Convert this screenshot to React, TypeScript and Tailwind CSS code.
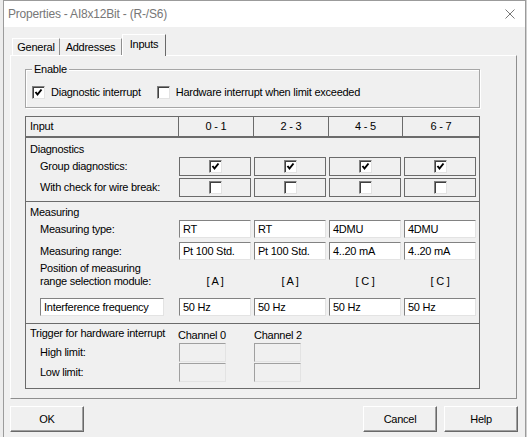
import React from "react";

const Check = ({ checked }: { checked: boolean }) => (
  <div className="w-[13px] h-[13px] bg-white border border-t-[#808080] border-l-[#808080] border-r-[#e3e3e3] border-b-[#e3e3e3] shadow-[inset_1px_1px_0_#404040] flex items-center justify-center shrink-0">
    {checked && (
      <svg width="11" height="11" viewBox="0 0 11 11">
        <polyline points="2.5,5 4.5,7.5 8.5,2.5" fill="none" stroke="#000" strokeWidth="2" />
      </svg>
    )}
  </div>
);

const Field = ({ text, w }: { text: string; w: string }) => (
  <div
    className={`${w} h-full bg-white border border-t-[#828282] border-l-[#828282] border-r-[#e3e3e3] border-b-[#e3e3e3] pl-[3px] flex items-center whitespace-nowrap overflow-hidden`}
  >
    {text}
  </div>
);

const Disabled = () => (
  <div className="w-[47px] h-full bg-[#f0f0f0] border border-t-[#a0a0a0] border-l-[#a0a0a0] border-r-[#e3e3e3] border-b-[#e3e3e3]" />
);

const cols = ["0 - 1", "2 - 3", "4 - 5", "6 - 7"];

const Row = ({ label, children, h }: { label: string; children: React.ReactNode; h: string }) => (
  <div className={`flex ${h}`}>
    <div className="w-[153px] pl-[14px] flex items-center">{label}</div>
    {children}
  </div>
);

const Btn = ({ text }: { text: string }) => (
  <div className="w-[74px] h-[26px] bg-[#f0f0f0] border border-t-white border-l-white border-r-[#696969] border-b-[#696969] shadow-[inset_-1px_-1px_0_#a0a0a0] flex items-center justify-center">
    {text}
  </div>
);

export default function App() {
  return (
    <div className="w-[529px] h-[437px] overflow-hidden bg-white flex font-['Liberation_Sans',Arial,sans-serif] text-[11px] tracking-[-0.25px] text-black leading-[13px]">
      <div className="w-[3px] bg-[#ececec] shrink-0" />
      <div className="w-[523px] h-[450px] border border-[#9b9b9b] bg-[#f0f0f0] flex flex-col shrink-0">
        {/* Title bar */}
        <div className="h-[26px] bg-white flex items-center justify-between pl-[4px] pr-[10px]">
          <span className="text-[12px] tracking-[-0.2px] text-[#777]">Properties - AI8x12Bit - (R-/S6)</span>
          <svg width="10" height="10" viewBox="0 0 10 10">
            <path d="M0.5 0.5 L9.5 9.5 M9.5 0.5 L0.5 9.5" stroke="#777" strokeWidth="1" />
          </svg>
        </div>

        {/* Tabs */}
        <div className="mt-[7px] h-[21px] flex items-end pl-[8px] relative z-10">
          <div className="w-[48px] h-[17px] border border-b-0 border-t-white border-l-white border-r-[#8e8e8e] flex items-center justify-center">
            General
          </div>
          <div className="w-[62px] h-[17px] border border-b-0 border-t-white border-l-0 border-r-[#8e8e8e] flex items-center justify-center">
            Addresses
          </div>
          <div className="w-[44px] h-[22px] -mb-[1px] bg-[#f0f0f0] border border-b-0 border-t-white border-l-white border-r-[#696969] flex items-start justify-center pt-[3px]">
            Inputs
          </div>
        </div>

        {/* Panel */}
        <div className="ml-[6px] w-[507px] h-[344px] border border-t-white border-l-white border-r-[#8e8e8e] border-b-[#8e8e8e] pt-[13px] pl-[14px] flex flex-col">
          {/* Enable group */}
          <div className="relative w-[455px] h-[39px] border border-[#a6a6a6] shadow-[inset_1px_1px_0_#fff,1px_1px_0_#fff] pt-[16px] pl-[6px]">
            <span className="absolute -top-[7px] left-[6px] px-[2px] bg-[#f0f0f0]">Enable</span>
            <div className="flex items-center h-[13px]">
              <Check checked />
              <span className="ml-[6px]">Diagnostic interrupt</span>
              <span className="ml-[16px]">
                <Check checked={false} />
              </span>
              <span className="ml-[6px]">Hardware interrupt when limit exceeded</span>
            </div>
          </div>

          {/* Table */}
          <div className="mt-[8px] w-[455px] border border-[#6b6b6b] flex flex-col">
            {/* header */}
            <div className="h-[21px] border-b-2 border-[#6b6b6b] grid grid-cols-[152px_75px_75px_74px_1fr]">
              <div className="pl-[4px] flex items-center">Input</div>
              {cols.map((c) => (
                <div key={c} className="border-l border-[#6b6b6b] flex items-center justify-center">
                  {c}
                </div>
              ))}
            </div>

            {/* Diagnostics */}
            <div className="border-b border-[#6b6b6b] pb-[4px] flex flex-col">
              <div className="h-[19px] pl-[4px] flex items-end pb-[1px]">Diagnostics</div>
              <Row label="Group diagnostics:" h="h-[19px]">
                {cols.map((c) => (
                  <div key={c} className="w-[75px] h-full">
                    <div className="w-[72px] h-full border border-[#6b6b6b] flex items-center justify-center">
                      <Check checked />
                    </div>
                  </div>
                ))}
              </Row>
              <div className="mt-[2px]">
                <Row label="With check for wire break:" h="h-[19px]">
                  {cols.map((c) => (
                    <div key={c} className="w-[75px] h-full">
                      <div className="w-[72px] h-full border border-[#6b6b6b] flex items-center justify-center">
                        <Check checked={false} />
                      </div>
                    </div>
                  ))}
                </Row>
              </div>
            </div>

            {/* Measuring */}
            <div className="border-b border-[#6b6b6b] pb-[7px] flex flex-col">
              <div className="h-[18px] pl-[4px] flex items-end pb-[1px]">Measuring</div>
              <Row label="Measuring type:" h="h-[18px]">
                {["RT", "RT", "4DMU", "4DMU"].map((t, i) => (
                  <div key={i} className="w-[75px] h-full">
                    <Field text={t} w="w-[72px]" />
                  </div>
                ))}
              </Row>
              <div className="mt-[4px]">
                <Row label="Measuring range:" h="h-[18px]">
                  {["Pt 100 Std.", "Pt 100 Std.", "4..20 mA", "4..20 mA"].map((t, i) => (
                    <div key={i} className="w-[75px] h-full">
                      <Field text={t} w="w-[72px]" />
                    </div>
                  ))}
                </Row>
              </div>
              <div className="mt-[2px] flex">
                <div className="w-[153px] pl-[14px]">
                  <div>Position of measuring</div>
                  <div>range selection module:</div>
                </div>
                {["[ A ]", "[ A ]", "[ C ]", "[ C ]"].map((t, i) => (
                  <div key={i} className="w-[75px] flex flex-col">
                    <div className="h-[13px]" />
                    <div className="w-[72px] text-center">{t}</div>
                  </div>
                ))}
              </div>
              <div className="mt-[10px] flex h-[18px]">
                <div className="w-[153px] pl-[14px] h-full">
                  <Field text="Interference frequency" w="w-[124px]" />
                </div>
                {cols.map((c) => (
                  <div key={c} className="w-[75px] h-full">
                    <Field text="50 Hz" w="w-[72px]" />
                  </div>
                ))}
              </div>
            </div>

            {/* Trigger */}
            <div className="pb-[6px] flex flex-col">
              <div className="h-[18px] flex">
                <div className="w-[152px] pl-[4px] flex items-center">Trigger for hardware interrupt</div>
                <div className="w-[76px] flex items-end">Channel 0</div>
                <div className="w-[75px] flex items-end">Channel 2</div>
              </div>
              <div className="mt-[1px]">
                <Row label="High limit:" h="h-[19px]">
                  <div className="w-[75px] h-full">
                    <Disabled />
                  </div>
                  <div className="w-[75px] h-full">
                    <Disabled />
                  </div>
                </Row>
              </div>
              <div className="mt-[1px]">
                <Row label="Low limit:" h="h-[19px]">
                  <div className="w-[75px] h-full">
                    <Disabled />
                  </div>
                  <div className="w-[75px] h-full">
                    <Disabled />
                  </div>
                </Row>
              </div>
            </div>
          </div>
        </div>

        {/* Buttons */}
        <div className="mt-[7px] flex pl-[6px] pr-[7px]">
          <Btn text="OK" />
          <div className="flex-1" />
          <Btn text="Cancel" />
          <div className="w-[7px]" />
          <Btn text="Help" />
        </div>
      </div>
      <div className="flex-1 bg-white border-l border-[#d0d0d0]" />
    </div>
  );
}
